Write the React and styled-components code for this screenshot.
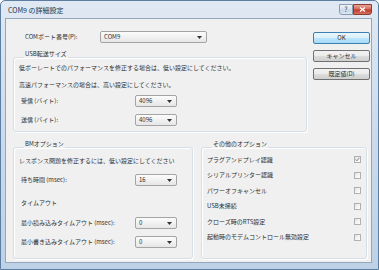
import React from 'react';
import styled, { createGlobalStyle } from 'styled-components';

const GlobalStyle = createGlobalStyle`
  html, body { margin: 0; padding: 0; background: #ffffff; }
  #root { width: 379px; height: 270px; }
`;

const uiFont = `"Noto Sans CJK JP", "Liberation Sans", sans-serif`;

const Window = styled.div`
  box-sizing: border-box;
  width: 379px;
  height: 270px;
  display: flex;
  flex-direction: column;
  padding: 0 6px 6px 4px;
  border: 1px solid #5d7ea3;
  border-radius: 5px 5px 0 0;
  background: linear-gradient(180deg, #e0e9f3 0%, #cfdded 40%, #bdd1e7 100%);
  font-family: ${uiFont};
  color: #2e2e2e;
  overflow: hidden;
`;

const TitleBar = styled.div`
  flex: none;
  height: 17px;
  display: flex;
  align-items: flex-start;
`;

const Title = styled.div`
  flex: 1;
  padding: 5px 0 0 3px;
  font-size: 7px;
  line-height: 8px;
  color: #25344a;
`;

const CaptionButtons = styled.div`
  display: flex;
  margin-top: 3px;
`;

const CaptionButton = styled.div`
  box-sizing: border-box;
  width: ${p => p.$w}px;
  height: 11px;
  display: flex;
  align-items: center;
  justify-content: center;
  font-size: 7px;
  line-height: 7px;
  color: #33475f;
  border: 1px solid ${p => (p.$close ? '#8d3c33' : '#8a9cb3')};
  border-radius: ${p => (p.$close ? '0 0 3px 0' : '0 0 0 3px')};
  background: ${p =>
    p.$close
      ? 'linear-gradient(180deg, #eba597 0%, #d66a5a 45%, #c0392b 55%, #d5705f 100%)'
      : 'linear-gradient(180deg, #eef3f8 0%, #d9e3ee 45%, #c9d6e5 55%, #dce6f1 100%)'};
`;

const Client = styled.div`
  flex: 1;
  display: flex;
  flex-direction: column;
  border: 1px solid #95a7bd;
  background: #f0f0f0;
  padding: 12px 1px 3px 7px;
`;

const TopArea = styled.div`
  display: flex;
  align-items: flex-start;
`;

const LeftColumn = styled.div`
  width: 294px;
  display: flex;
  flex-direction: column;
`;

const ButtonColumn = styled.div`
  width: 57px;
  margin: 1px 0 0 6px;
  display: flex;
  flex-direction: column;
  gap: 6px;
`;

const DialogButton = styled.button`
  box-sizing: border-box;
  width: 57px;
  height: 12px;
  padding: 0;
  display: flex;
  align-items: center;
  justify-content: center;
  font-family: ${uiFont};
  font-size: 6px;
  line-height: 8px;
  color: #2e2e2e;
  border-radius: 2px;
  border: 1px solid ${p => (p.$default ? '#3c7fb1' : '#707070')};
  background: ${p =>
    p.$default
      ? 'linear-gradient(180deg, #eaf6fd 0%, #d9f0fc 50%, #bee6fd 50%, #a7d9f5 100%)'
      : 'linear-gradient(180deg, #f2f2f2 0%, #ebebeb 50%, #dddddd 50%, #cfcfcf 100%)'};
`;

const BottomArea = styled.div`
  flex: 1;
  display: flex;
  gap: 8px;
  margin: 8px 3px 0 0;
`;

const Group = styled.fieldset`
  margin: ${p => p.$mt || 0}px 0 0;
  padding: ${p => p.$pad};
  min-width: 0;
  width: ${p => (p.$w ? `${p.$w}px` : 'auto')};
  flex: ${p => (p.$grow ? 1 : 'none')};
  box-sizing: border-box;
  display: flex;
  flex-direction: column;
  border: 1px solid #d5dfe5;
  border-radius: 3px;
  box-shadow: inset 1px 1px 0 #ffffff, 1px 1px 0 #ffffff;
`;

const Caption = styled.legend`
  margin-left: 5px;
  padding: 0 1px 6px;
  font-size: 6px;
  line-height: 8px;
  white-space: nowrap;
`;

const Note = styled.div`
  margin-top: ${p => p.$mt || 0}px;
  padding-left: ${p => p.$indent || 0}px;
  font-size: 6px;
  line-height: 8px;
  white-space: nowrap;
`;

const FieldRow = styled.div`
  height: 12px;
  display: flex;
  align-items: center;
  margin-top: ${p => p.$mt || 0}px;
  padding-left: ${p => p.$indent || 0}px;
`;

const FieldLabel = styled.div`
  width: ${p => p.$w}px;
  flex: none;
  font-size: 6px;
  line-height: 8px;
  white-space: nowrap;
`;

const Combo = styled.div`
  box-sizing: border-box;
  width: ${p => p.$w}px;
  height: 12px;
  display: flex;
  align-items: center;
  justify-content: space-between;
  padding: 0 4px 0 3px;
  border: 1px solid #a4a4a4;
  border-radius: 2px;
  background: linear-gradient(180deg, #fcfcfc 0%, #f1f1f1 50%, #e6e6e6 100%);
  font-size: 6px;
  line-height: 8px;
`;

const OptionList = styled.div`
  margin-top: -2px;
  display: flex;
  flex-direction: column;
`;

const OptionRow = styled.div`
  height: 15.5px;
  display: flex;
  align-items: center;
  justify-content: space-between;
  font-size: 6px;
  line-height: 8px;
  white-space: nowrap;
`;

const CheckBox = styled.div`
  box-sizing: border-box;
  width: 7px;
  height: 7px;
  display: flex;
  align-items: center;
  justify-content: center;
  border: 1px solid #b0b0b0;
  background: linear-gradient(135deg, #e2e2e2 0%, #f5f5f5 60%, #ffffff 100%);
`;

const Arrow = () => (
  <svg width="5" height="3" viewBox="0 0 5 3">
    <polygon points="0,0 5,0 2.5,3" fill="#333" />
  </svg>
);

const Check = () => (
  <svg width="5" height="5" viewBox="0 0 5 5">
    <polyline points="0.6,2.4 1.9,3.8 4.4,0.8" fill="none" stroke="#7a8290" strokeWidth="1" />
  </svg>
);

const Select = ({ w, value }) => (
  <Combo $w={w}>
    <span>{value}</span>
    <Arrow />
  </Combo>
);

const options = [
  { label: 'プラグアンドプレイ認識', checked: true },
  { label: 'シリアルプリンター認識' },
  { label: 'パワーオフキャンセル' },
  { label: 'USB未接続' },
  { label: 'クローズ時のRTS設定' },
  { label: '起動時のモデムコントロール無効設定' },
];

const App = () => (
  <>
    <GlobalStyle />
    <Window>
      <TitleBar>
        <Title>COM9 の詳細設定</Title>
        <CaptionButtons>
          <CaptionButton $w={14}>?</CaptionButton>
          <CaptionButton $w={19} $close>
            <svg width="7" height="5" viewBox="0 0 7 5">
              <path d="M1 0.5 L6 4.5 M6 0.5 L1 4.5" stroke="#ffffff" strokeWidth="1.3" />
            </svg>
          </CaptionButton>
        </CaptionButtons>
      </TitleBar>

      <Client>
        <TopArea>
          <LeftColumn>
            <FieldRow $indent={12}>
              <FieldLabel $w={75}>COMポート番号(P):</FieldLabel>
              <Select w={107} value="COM9" />
            </FieldRow>

            <Group $mt={7} $pad="0 5px 5px 5px">
              <Caption>USB転送サイズ</Caption>
              <Note>低ボーレートでのパフォーマンスを修正する場合は、低い設定にしてください。</Note>
              <Note $mt={9}>高速パフォーマンスの場合は、高い設定にしてください。</Note>
              <FieldRow $mt={6} $indent={2}>
                <FieldLabel $w={114}>受信 (バイト):</FieldLabel>
                <Select w={42} value="4096" />
              </FieldRow>
              <FieldRow $mt={7} $indent={2}>
                <FieldLabel $w={114}>送信 (バイト):</FieldLabel>
                <Select w={42} value="4096" />
              </FieldRow>
            </Group>
          </LeftColumn>

          <ButtonColumn>
            <DialogButton $default>OK</DialogButton>
            <DialogButton>キャンセル</DialogButton>
            <DialogButton>既定値(D)</DialogButton>
          </ButtonColumn>
        </TopArea>

        <BottomArea>
          <Group $w={180} $pad="3px 5px 0 5px">
            <Caption>BMオプション</Caption>
            <Note>レスポンス問題を修正するには、低い設定にしてください</Note>
            <FieldRow $mt={9} $indent={2}>
              <FieldLabel $w={114}>待ち時間 (msec):</FieldLabel>
              <Select w={42} value="16" />
            </FieldRow>
            <Note $mt={13} $indent={2}>タイムアウト</Note>
            <FieldRow $mt={10} $indent={2}>
              <FieldLabel $w={114}>最小読み込みタイムアウト (msec):</FieldLabel>
              <Select w={42} value="0" />
            </FieldRow>
            <FieldRow $mt={7} $indent={2}>
              <FieldLabel $w={114}>最小書き込みタイムアウト (msec):</FieldLabel>
              <Select w={42} value="0" />
            </FieldRow>
          </Group>

          <Group $grow $pad="0 5px 0 5px">
            <Caption>その他のオプション</Caption>
            <OptionList>
              {options.map(o => (
                <OptionRow key={o.label}>
                  <span>{o.label}</span>
                  <CheckBox>{o.checked && <Check />}</CheckBox>
                </OptionRow>
              ))}
            </OptionList>
          </Group>
        </BottomArea>
      </Client>
    </Window>
  </>
);

export default App;
